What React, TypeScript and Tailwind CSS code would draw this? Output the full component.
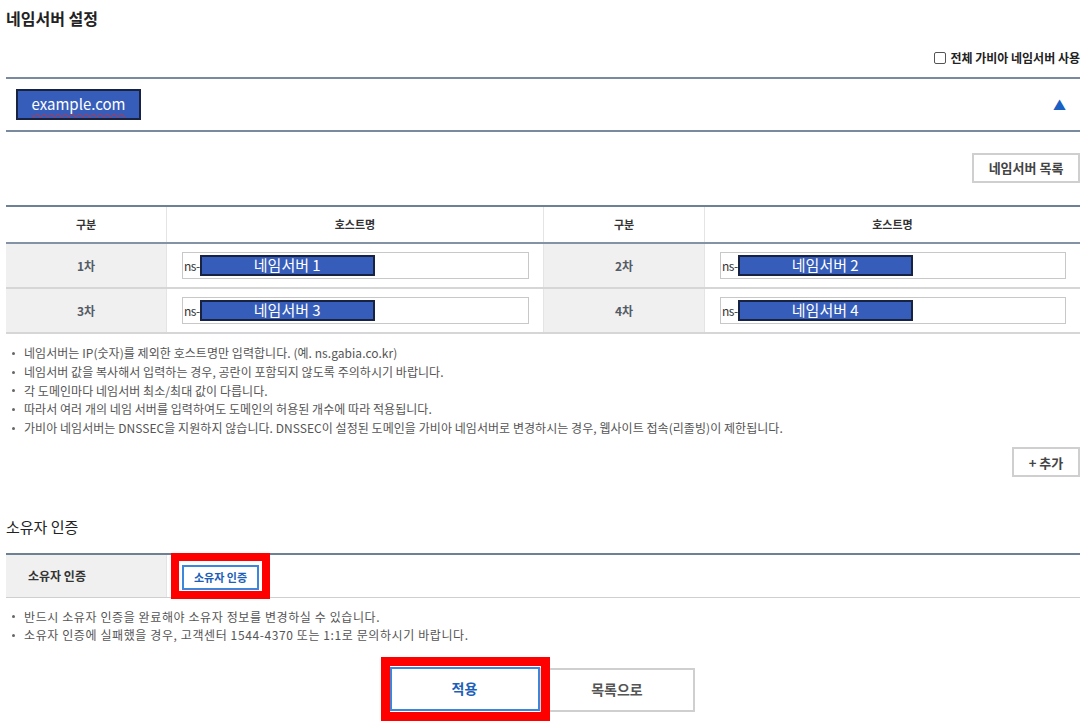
const FONT = "font-['Noto_Sans_CJK_KR','Noto_Sans',sans-serif]";

const NOTES = [
  "네임서버는 IP(숫자)를 제외한 호스트명만 입력합니다. (예. ns.gabia.co.kr)",
  "네임서버 값을 복사해서 입력하는 경우, 공란이 포함되지 않도록 주의하시기 바랍니다.",
  "각 도메인마다 네임서버 최소/최대 값이 다릅니다.",
  "따라서 여러 개의 네임 서버를 입력하여도 도메인의 허용된 개수에 따라 적용됩니다.",
  "가비아 네임서버는 DNSSEC을 지원하지 않습니다. DNSSEC이 설정된 도메인을 가비아 네임서버로 변경하시는 경우, 웹사이트 접속(리졸빙)이 제한됩니다.",
];

const OWNER_NOTES = [
  "반드시 소유자 인증을 완료해야 소유자 정보를 변경하실 수 있습니다.",
  "소유자 인증에 실패했을 경우, 고객센터 1544-4370 또는 1:1로 문의하시기 바랍니다.",
];

interface INotes {
  items: string[];
  wide?: boolean;
}
const Notes = ({ items, wide }: INotes) => {
  return (
    <ul className="flex flex-col">
      {items.map((t, i) => (
        <li
          key={i}
          className={`flex items-center h-[18.7px] text-[12px] text-[#555] ${wide ? "tracking-[0.6px]" : "tracking-[0.05px]"}`}
        >
          <span className="w-[3px] h-[3px] rounded-full bg-[#666] ml-[6px] mr-[9px] shrink-0" />
          {t}
        </li>
      ))}
    </ul>
  );
};

interface INsInput {
  n: number;
}
const NsInput = ({ n }: INsInput) => {
  return (
    <div className="w-full h-[27px] border border-[#c8c8c8] bg-white flex items-center">
      <span className="text-[12px] text-[#333] pl-[1px] tracking-[-0.5px]">ns-</span>
      <span className="w-[175px] h-[21px] bg-[#365dba] border-2 border-[#172340] flex items-center justify-center text-white text-[15px]">
        네임서버 {n}
      </span>
    </div>
  );
};

const Label = ({ text }: { text: string }) => (
  <div className="bg-[#f0f0f0] flex items-center justify-center text-[12px] font-bold text-[#555b66] border-r border-[#e4e4e4]">
    {text}
  </div>
);

export default function App() {
  return (
    <div className={`${FONT} w-[1088px] h-[728px] bg-white pl-[6px] pr-[8px] text-[#222] overflow-hidden`}>
      <h1 className="pt-[9px] text-[16px] leading-[19px] font-bold text-[#222]">네임서버 설정</h1>

      <div className="flex justify-end items-center mt-[22px] h-[16px] gap-[4px]">
        <span className="w-[12px] h-[12px] border border-[#555] rounded-[2px] bg-white" />
        <span className="text-[12px] font-bold text-[#222]">전체 가비아 네임서버 사용</span>
      </div>

      <div className="mt-[11px] border-t-2 border-[#7a8a9e] h-[55px] flex items-center justify-between pl-[10px] pr-[14px] border-b-2">
        <span className="w-[125px] h-[31px] bg-[#365dba] border-2 border-[#172340] flex items-center justify-center text-white text-[15px] underline decoration-wavy decoration-[#d62b2b] decoration-1 underline-offset-[3px]">
          example.com
        </span>
        <span className="text-[#1a5fc2] text-[13px]">▲</span>
      </div>

      <div className="flex justify-end mt-[21px]">
        <button className="w-[108px] h-[30px] border-2 border-[#cfcfcf] bg-white text-[13px] font-bold text-[#444]">
          네임서버 목록
        </button>
      </div>

      <div className="mt-[22px] border-t-2 border-[#6e8094]">
        <div className="grid grid-cols-[161px_377px_161px_375px] h-[37px] border-b-2 border-[#8393a5] text-[11px] font-bold text-[#333]">
          <div className="flex items-center justify-center border-r border-[#e4e4e4]">구분</div>
          <div className="flex items-center justify-center border-r border-[#e4e4e4]">호스트명</div>
          <div className="flex items-center justify-center border-r border-[#e4e4e4]">구분</div>
          <div className="flex items-center justify-center">호스트명</div>
        </div>
        {[
          [1, 2],
          [3, 4],
        ].map((row, i) => (
          <div key={i} className="grid grid-cols-[161px_377px_161px_375px] h-[45px] border-b-2 border-[#d6d6d6]">
            <Label text={`${row[0]}차`} />
            <div className="flex items-center pl-[15px] pr-[14px] border-r border-[#e4e4e4]">
              <NsInput n={row[0]} />
            </div>
            <Label text={`${row[1]}차`} />
            <div className="flex items-center pl-[15px] pr-[14px]">
              <NsInput n={row[1]} />
            </div>
          </div>
        ))}
      </div>

      <div className="mt-[10px]">
        <Notes items={NOTES} />
      </div>

      <div className="flex justify-end mt-[10px]">
        <button className="w-[68px] h-[30px] border-2 border-[#cfcfcf] bg-white text-[13px] font-bold text-[#444]">
          + 추가
        </button>
      </div>

      <h2 className="mt-[40px] text-[15px] leading-[20px] text-[#222]">소유자 인증</h2>

      <div className="mt-[16px] border-t-2 border-[#6e8094] border-b border-b-[#cfcfcf] grid grid-cols-[161px_1fr] h-[45px]">
        <div className="bg-[#f0f0f0] flex items-center pl-[22px] text-[12px] font-bold text-[#333] border-r border-[#e4e4e4]">
          소유자 인증
        </div>
        <div className="flex items-center pl-[15px]">
          <div className="relative">
            <button className="w-[77px] h-[25px] border-2 border-[#3c87dc] bg-white text-[11px] font-bold text-[#1c5fb8]">
              소유자 인증
            </button>
            <span className="absolute -left-[11px] -right-[11px] -top-[10px] -bottom-[9px] border-[8px] border-[#ff0000]" />
          </div>
        </div>
      </div>

      <div className="mt-[9px]">
        <Notes items={OWNER_NOTES} wide />
      </div>

      <div className="flex justify-center mt-[22px] pr-[2px]">
        <div className="relative">
          <button className="w-[150px] h-[44px] border-2 border-[#3c87dc] bg-white text-[14px] font-bold text-[#1c5fb8]">
            적용
          </button>
          <span className="absolute -left-[9px] -right-[10px] -top-[10px] -bottom-[9px] border-[9px] border-[#ff0000]" />
        </div>
        <button className="w-[155px] h-[44px] mt-[1px] border-2 border-[#cfcfcf] bg-white text-[14px] font-bold text-[#555]">
          목록으로
        </button>
      </div>
    </div>
  );
}
